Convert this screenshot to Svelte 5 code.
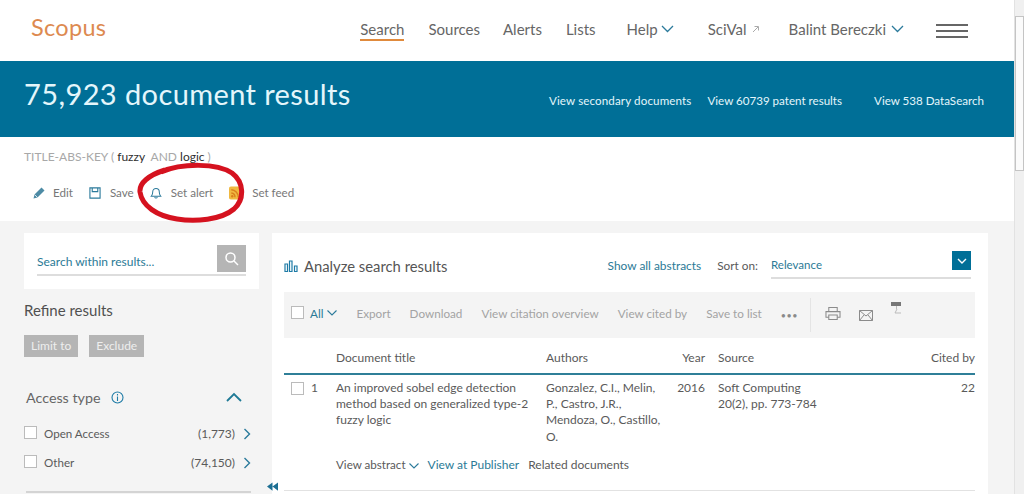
<script>
	const nav = [
		{ label: 'Search', active: true },
		{ label: 'Sources' },
		{ label: 'Alerts' },
		{ label: 'Lists' }
	];
	const facets = [
		{ label: 'Open Access', count: '(1,773)' },
		{ label: 'Other', count: '(74,150)' }
	];
	const tools = ['Export', 'Download', 'View citation overview', 'View cited by', 'Save to list'];
</script>

<div class="window">
	<main class="page">
		<header class="top">
			<span class="logo">Scopus</span>
			<nav class="nav">
				{#each nav as item}
					<span class="nav-item" class:active={item.active}>{item.label}</span>
				{/each}
				<span class="nav-item help">Help
					<svg class="chev" width="13" height="8" viewBox="0 0 13 8"><path d="M1 1l5.5 5.5L12 1" /></svg>
				</span>
				<span class="nav-item scival">SciVal
					<svg width="8" height="8" viewBox="0 0 8 8" class="ext"><path d="M1 7l5-5M2.5 1.5H6.5V5.5" /></svg>
				</span>
				<span class="nav-item user">Balint Bereczki
					<svg class="chev" width="13" height="8" viewBox="0 0 13 8"><path d="M1 1l5.5 5.5L12 1" /></svg>
				</span>
				<span class="burger"><i></i><i></i><i></i></span>
			</nav>
		</header>

		<section class="band">
			<h1>75,923 document results</h1>
			<div class="band-links">
				<span class="first">View secondary documents</span>
				<span>View 60739 patent results</span>
				<span class="last">View 538 DataSearch</span>
			</div>
		</section>

		<section class="query">
			<p class="query-text">TITLE-ABS-KEY ( <b>fuzzy</b>&nbsp; AND <b>logic</b> )</p>
			<div class="actions">
				<span class="action edit">
					<svg width="14" height="14" viewBox="0 0 14 14"><path d="M1.5 12.5l1-4L9.5 1.5l3 3-7 7z" fill="#4d8ba5" /><path d="M2.5 8.5l3 3" stroke="#fff" stroke-width=".8" /></svg>
					Edit
				</span>
				<span class="action save">
					<svg width="12" height="12" viewBox="0 0 13 13" fill="none" stroke="#2b7a9b" stroke-width="1.2"><path d="M1 1h11v11H1z" /><path d="M3.5 1v4h6V1" /></svg>
					Save
				</span>
				<span class="action alert">
					<svg width="12" height="14" viewBox="0 0 13 14" fill="none" stroke="#2b7a9b" stroke-width="1.1"><path d="M1.5 10.5c1.5-1.5 1.5-3 1.5-5a3.5 3.5 0 0 1 7 0c0 2 0 3.5 1.5 5z" /><path d="M5 11.5a1.6 1.6 0 0 0 3 0" /></svg>
					Set alert
				</span>
				<span class="action feed">
					<svg width="12" height="14" viewBox="0 0 13 14"><rect width="13" height="14" rx="2" fill="#f0b840" /><path d="M2.5 3.5a8 8 0 0 1 7.5 8M2.5 7a4.5 4.5 0 0 1 4 4.5" fill="none" stroke="#d97f1c" stroke-width="1.5" /><circle cx="3.5" cy="10.5" r="1.3" fill="#d97f1c" /></svg>
					Set feed
				</span>
			</div>
		</section>

		<section class="content">
			<aside class="side">
				<div class="search-card">
					<div class="search-field">
						<span class="search-text">Search within results...</span>
						<span class="search-btn">
							<svg width="15" height="15" viewBox="0 0 15 15" fill="none" stroke="#fff" stroke-width="1.5"><circle cx="6.5" cy="6.5" r="4.5" /><path d="M10 10l4 4" /></svg>
						</span>
					</div>
				</div>
				<h2 class="refine">Refine results</h2>
				<div class="refine-btns">
					<span>Limit to</span>
					<span>Exclude</span>
				</div>
				<div class="facet-head">
					<span class="facet-title">Access type</span>
					<svg width="13" height="13" viewBox="0 0 13 13" fill="none" stroke="#1e7ba6" stroke-width="1.1"><circle cx="6.5" cy="6.5" r="5.5" /><path d="M6.5 5.5v4.5M6.5 3v1.4" /></svg>
					<svg class="caret" width="16" height="10" viewBox="0 0 16 10" fill="none" stroke="#1f7a96" stroke-width="1.8"><path d="M1 9l7-7 7 7" /></svg>
				</div>
				{#each facets as f}
					<div class="facet">
						<span class="box"></span>
						<span class="facet-label">{f.label}</span>
						<span class="facet-count">{f.count}</span>
						<svg width="8" height="12" viewBox="0 0 8 12" fill="none" stroke="#2b7a9b" stroke-width="1.4"><path d="M1.5 1l5 5-5 5" /></svg>
					</div>
				{/each}
				<div class="side-rule"></div>
			</aside>

			<div class="collapse">
				<svg width="11" height="9" viewBox="0 0 12 9" fill="#1d6f93"><path d="M6 0v9L0 4.5zM12 0v9L6 4.5z" /></svg>
			</div>

			<div class="results">
				<div class="results-head">
					<svg width="14" height="12" viewBox="0 0 14 12" fill="none" stroke="#1e7ba6" stroke-width="1.2"><path d="M1 4h2.5v7.5H1zM5.5 1H8v10.5H5.5zM10.5 6H13v5.5h-2.5z" /></svg>
					<span class="analyze">Analyze search results</span>
					<span class="show-all">Show all abstracts</span>
					<span class="sort-label">Sort on:</span>
					<div class="sort-select">
						<span>Relevance</span>
						<span class="sort-btn">
							<svg width="10" height="6" viewBox="0 0 10 6" fill="none" stroke="#fff" stroke-width="1.4"><path d="M1 1l4 4 4-4" /></svg>
						</span>
					</div>
				</div>

				<div class="toolbar">
					<span class="box"></span>
					<span class="all">All
						<svg width="10" height="6" viewBox="0 0 10 6" fill="none" stroke="#2b7a9b" stroke-width="1.1"><path d="M.5.5L5 5 9.5.5" /></svg>
					</span>
					{#each tools as t}
						<span class="tool">{t}</span>
					{/each}
					<span class="dots">•••</span>
					<span class="divider"></span>
					<svg class="ico-print" width="16" height="15" viewBox="0 0 17 16" fill="none" stroke="#8b8b8b" stroke-width="1.1"><path d="M4 6V1.5h9V6M4 12H1V6h15v6h-3" /><path d="M4 9.5h9v5H4z" /></svg>
					<svg class="ico-mail" width="14" height="11" viewBox="0 0 14 11" fill="none" stroke="#8b8b8b" stroke-width="1"><path d="M.5.5h13v10H.5zM.5.5L7 6l6.5-5.5M.5 10.5L5 5M13.5 10.5L9 5" /></svg>
					<svg class="ico-export" width="12" height="14" viewBox="0 0 12 14" fill="none"><rect x="1" y="0" width="10" height="4" fill="#777" /><path d="M6.5 4v3M7 7l-2 4h6" stroke="#bbb" /></svg>
				</div>

				<div class="grid head">
					<span></span>
					<span>Document title</span>
					<span>Authors</span>
					<span class="year">Year</span>
					<span class="source">Source</span>
					<span class="cited">Cited by</span>
				</div>
				<div class="grid row">
					<span class="num"><span class="box"></span>1</span>
					<span>An improved sobel edge detection method based on generalized type-2 fuzzy logic</span>
					<span class="authors">Gonzalez, C.I., Melin, P., Castro, J.R., Mendoza, O., Castillo, O.</span>
					<span class="year">2016</span>
					<span class="source">Soft Computing<br />20(2), pp. 773-784</span>
					<span class="cited">22</span>
				</div>
				<div class="row-links">
					<span class="abstract">View abstract
						<svg width="10" height="6" viewBox="0 0 10 6" fill="none" stroke="#2b7a9b" stroke-width="1.1"><path d="M.5.5L5 5 9.5.5" /></svg>
					</span>
					<span class="pub">View at Publisher</span>
					<span>Related documents</span>
				</div>
				<div class="row-rule"></div>
			</div>
		</section>

		<svg class="circle" width="110" height="62" viewBox="0 0 110 62" fill="none"><path d="M24 10C45 1 80 1 95 11c12 9 13 26 2 36-13 11-39 13-57 10C20 54 5 44 3 30 2 21 12 13 28 8" stroke="#d5121f" stroke-width="5" /></svg>
	</main>

	<div class="scrollbar">
		<span class="thumb"></span>
	</div>
</div>

<style>
	:global(body) {
		margin: 0;
		background: #fff;
	}

	.window {
		display: flex;
		height: 494px;
		overflow: hidden;
		font-family: 'Lato', 'Noto Sans', sans-serif;
		color: #5a5a5a;
		font-size: 12px;
	}

	.page {
		position: relative;
		flex: 1;
		min-width: 0;
	}

	.scrollbar {
		width: 10px;
		background: #f0f0f0;
		border-left: 1px solid #e2e2e2;
		box-sizing: border-box;
		padding-top: 16px;
	}

	.thumb {
		display: block;
		height: 155px;
		background: #fbfbfb;
		border: 1px solid #c4c4c4;
		box-sizing: border-box;
	}

	.top {
		height: 61px;
		display: flex;
		align-items: center;
		justify-content: space-between;
		padding-left: 31px;
		padding-right: 46px;
		box-sizing: border-box;
	}

	.logo {
		font-size: 23.5px;
		color: #dd8a50;
		letter-spacing: 0.3px;
		margin-top: -7px;
	}

	.nav {
		display: flex;
		align-items: center;
		font-size: 15px;
		color: #666;
		margin-top: -4px;
	}

	.nav-item {
		margin-right: 24px;
		line-height: 20px;
		display: flex;
		align-items: center;
		gap: 5px;
		white-space: nowrap;
	}

	.nav-item:nth-child(2) {
		margin-right: 23px;
	}

	.nav-item.active {
		border-bottom: 2px solid #e08a3c;
		margin-bottom: -2px;
	}

	.help {
		margin-left: 7px;
		margin-right: 34px;
		gap: 3px;
	}

	.scival {
		margin-right: 29px;
	}

	.user {
		margin-right: 32px;
	}

	.chev path {
		fill: none;
		stroke: #2b7a9b;
		stroke-width: 1.3;
	}

	.ext path {
		fill: none;
		stroke: #aaa;
		stroke-width: 1;
	}

	.burger {
		width: 32px;
		display: flex;
		flex-direction: column;
		gap: 4px;
		margin-top: 4px;
	}

	.burger i {
		display: block;
		height: 2px;
		background: #666;
	}

	.band {
		height: 76px;
		background: #006f97;
		color: #e4f6fb;
		display: flex;
		align-items: center;
		justify-content: space-between;
		padding: 0 30px 0 24px;
		box-sizing: border-box;
	}

	h1 {
		margin: 0 0 12px;
		font-size: 29px;
		font-weight: 400;
		letter-spacing: 0.4px;
		white-space: nowrap;
	}

	.band-links {
		display: flex;
		font-size: 11.6px;
		gap: 16px;
		margin-top: 2px;
	}

	.band-links .first {
		letter-spacing: 0.12px;
	}

	.band-links .last {
		margin-left: 16px;
	}

	.query {
		height: 84px;
		padding: 13px 0 0 24px;
		box-sizing: border-box;
	}

	.query-text {
		margin: 0;
		font-size: 12px;
		line-height: 14px;
		color: #a8a8a8;
	}

	.query-text b {
		font-weight: 400;
		color: #2e2e2e;
	}

	.actions {
		display: flex;
		align-items: center;
		margin-top: 21px;
		padding-left: 8px;
		color: #777;
		line-height: 16px;
		font-size: 11.6px;
	}

	.action {
		display: flex;
		align-items: center;
		gap: 7px;
		white-space: nowrap;
	}

	.edit {
		margin-right: 16px;
	}

	.save {
		margin-right: 16px;
		gap: 9px;
	}

	.alert {
		margin-right: 16px;
		gap: 9px;
	}

	.feed {
		gap: 11px;
	}

	.content {
		position: relative;
		background: #f4f4f4;
		height: 273px;
		display: flex;
		padding: 12px 0 0 24px;
		box-sizing: border-box;
	}

	.side {
		width: 235px;
		flex-shrink: 0;
	}

	.search-card {
		background: #fff;
		height: 56px;
		padding: 12px 13px 0;
		box-sizing: border-box;
	}

	.search-field {
		display: flex;
		justify-content: space-between;
		height: 29px;
		border-bottom: 2px solid #ddd;
		color: #2b7a96;
		font-size: 12px;
		line-height: 30px;
	}

	.search-text {
		padding-top: 2px;
	}

	.search-btn {
		width: 29px;
		height: 27px;
		background: #b5b5b5;
		display: flex;
		align-items: center;
		justify-content: center;
	}

	.refine {
		margin: 11px 0 0;
		font-size: 15px;
		font-weight: 400;
		color: #505050;
		line-height: 20px;
	}

	.refine-btns {
		display: flex;
		gap: 11px;
		margin-top: 15px;
	}

	.refine-btns span {
		background: #b5b5b5;
		color: #eee;
		height: 22px;
		line-height: 22px;
		padding: 0 7px;
	}

	.facet-head {
		display: flex;
		align-items: center;
		gap: 10px;
		margin-top: 30px;
		padding-left: 2px;
		height: 20px;
	}

	.facet-title {
		font-size: 14.3px;
		color: #666;
	}

	.caret {
		margin-left: auto;
		margin-right: 17px;
	}

	.facet {
		display: flex;
		align-items: center;
		height: 29px;
	}

	.facet-head + .facet {
		margin-top: 12px;
	}

	.facet .box {
		margin-top: -2px;
	}

	.facet-label {
		margin-left: 7px;
		font-size: 11.6px;
	}

	.facet-count {
		margin-left: auto;
		margin-right: 8px;
	}

	.facet svg {
		margin-right: 8px;
	}

	.box {
		width: 11px;
		height: 11px;
		border: 1px solid #bbb;
		background: #fff;
		flex-shrink: 0;
		display: inline-block;
	}

	.side-rule {
		height: 2px;
		background: #d4d4d4;
		margin: 14px 8px 0 2px;
	}

	.collapse {
		position: absolute;
		left: 266px;
		bottom: -2px;
		width: 12px;
		height: 20px;
		display: flex;
		align-items: center;
		justify-content: center;
	}

	.results {
		margin-left: 13px;
		width: 716px;
		background: #fff;
		padding: 0 13px 0 12px;
		box-sizing: border-box;
	}

	.results-head {
		display: flex;
		align-items: center;
		height: 59px;
		padding-top: 6px;
		padding-right: 4px;
		box-sizing: border-box;
	}

	.analyze {
		font-size: 14.8px;
		color: #555;
		margin-left: 6px;
	}

	.show-all {
		margin-left: auto;
		color: #2b7a96;
		font-size: 11.9px;
	}

	.sort-label {
		margin-left: 16px;
		font-size: 11.8px;
	}

	.sort-select {
		display: flex;
		justify-content: space-between;
		margin-left: 13px;
		width: 200px;
		height: 26px;
		border-bottom: 2px solid #ddd;
		color: #2b7a96;
		font-size: 11.5px;
		line-height: 28px;
		margin-top: -1px;
	}

	.sort-btn {
		width: 19px;
		height: 19px;
		background: #006f97;
		display: flex;
		align-items: center;
		justify-content: center;
	}

	.toolbar {
		display: flex;
		align-items: center;
		background: #f4f4f4;
		height: 46px;
		padding: 0 7px;
		color: #a3a3a3;
		font-size: 11.7px;
	}

	.toolbar > .box {
		margin-top: -6px;
	}

	.all {
		color: #2b7a96;
		margin-left: 6px;
		display: flex;
		align-items: center;
		gap: 4px;
		margin-top: -5px;
	}

	.tool {
		margin-left: 19px;
		white-space: nowrap;
		margin-top: -4px;
	}

	.dots {
		margin-left: 19px;
		font-size: 9px;
		letter-spacing: 0.5px;
		color: #8a8a8a;
	}

	.divider {
		width: 1px;
		height: 34px;
		background: #e4e4e4;
		margin: 0 14px 0 12px;
	}

	.ico-print {
		margin-top: -3px;
	}

	.ico-mail {
		margin-left: 18px;
	}

	.ico-export {
		margin: -12px 0 0 17px;
	}

	.grid {
		display: grid;
		grid-template-columns: 52px 210px 127px 32px 1fr 50px;
	}

	.head {
		height: 37px;
		align-items: center;
		border-bottom: 2px solid #2f7f98;
		padding-top: 3px;
		box-sizing: border-box;
	}

	.row {
		padding-top: 5px;
		line-height: 16.2px;
		height: 82px;
		box-sizing: border-box;
	}

	.authors {
		padding-right: 5px;
	}

	.year {
		text-align: right;
	}

	.source {
		padding-left: 13px;
	}

	.cited {
		text-align: right;
		white-space: nowrap;
	}

	.num {
		padding-left: 7px;
		display: flex;
		align-items: flex-start;
		gap: 7px;
	}

	.num .box {
		margin-top: 2px;
	}

	.row-links {
		display: flex;
		gap: 9px;
		padding-left: 52px;
		height: 33px;
		line-height: 16px;
	}

	.abstract {
		font-size: 11.6px;
	}

	.pub {
		color: #2b7a96;
	}

	.row-rule {
		height: 1px;
		background: #e2e2e2;
	}

	.circle {
		position: absolute;
		left: 137px;
		top: 162px;
	}
</style>
